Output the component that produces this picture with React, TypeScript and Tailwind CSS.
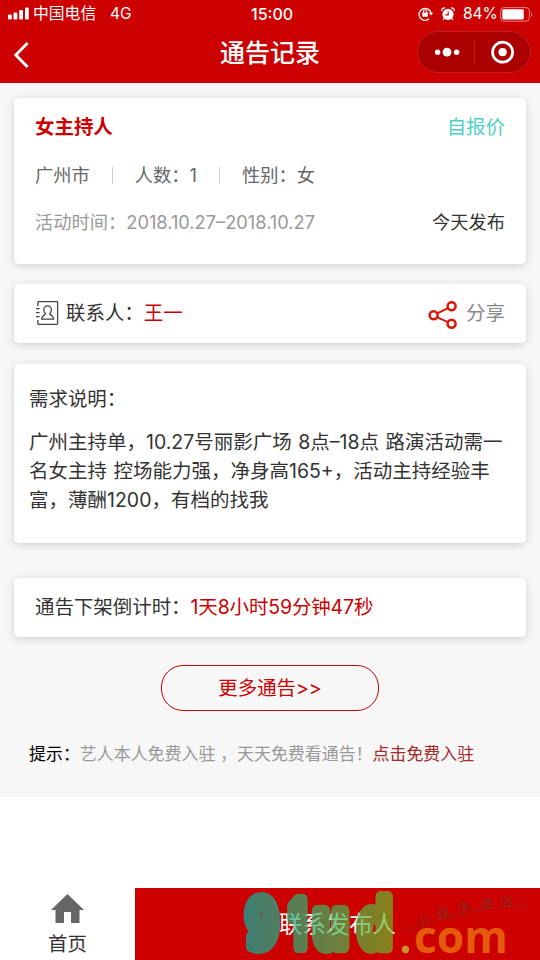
import type { ReactNode } from 'react';

const CARD = 'mx-[14px] rounded-[5px] bg-white shadow-[0_2px_8px_rgba(0,0,0,0.16)]';

function StatusBar() {
  return (
    <div className="flex h-7 items-center text-white">
      <svg className="ml-2 h-[14px] w-[22px] shrink-0" viewBox="0 0 22 14" fill="currentColor">
        <rect x="0" y="7.5" width="3.8" height="5" rx="1" />
        <rect x="5.5" y="5.5" width="3.8" height="7" rx="1" />
        <rect x="11.2" y="3" width="3.8" height="9.5" rx="1" />
        <rect x="17" y="0.5" width="3.8" height="12" rx="1" />
      </svg>
      <span className="ml-[3px] w-[77px] text-[15.8px]">中国电信</span>
      <span className="w-[141px] text-[15.5px]">4G</span>
      <span className="w-[167px] text-[16px] font-medium">15:00</span>
      <svg className="h-4 w-4 shrink-0" viewBox="0 0 16 16" fill="none" stroke="currentColor" strokeWidth="1.3">
        <path d="M11.2 12.8A6 6 0 1 1 13 7.2" />
        <path d="M10.8 6.8h4.4L13 9.6z" fill="currentColor" stroke="none" />
        <rect x="4.3" y="6.6" width="5.6" height="4.2" rx="0.6" fill="currentColor" stroke="none" />
        <path d="M5.5 7V5.4a1.6 1.6 0 0 1 3.2 0V7" strokeWidth="1.1" />
      </svg>
      <svg className="ml-[7px] h-[14px] w-[14px] shrink-0" viewBox="0 0 14 14" fill="currentColor">
        <circle cx="7" cy="7.4" r="5.6" />
        <path d="M3.2 11.4 2.2 13M10.8 11.4l1 1.6" stroke="currentColor" strokeWidth="1.3" />
        <path d="M1 4a2.2 2.2 0 0 1 3-2.8M13 4a2.2 2.2 0 0 0-3-2.8" stroke="currentColor" strokeWidth="1.3" fill="none" />
        <path d="M7.2 4.4v3.5H4.3" stroke="#cc0000" strokeWidth="1.1" fill="none" />
      </svg>
      <span className="ml-2 w-[37px] text-[15.5px]">84%</span>
      <svg className="h-[15px] w-[34px] shrink-0" viewBox="0 0 34 15">
        <rect x="0.6" y="0.6" width="28.8" height="13.6" rx="3.4" fill="none" stroke="#fff" strokeOpacity="0.5" />
        <rect x="2.3" y="2.3" width="21.5" height="10.2" rx="1.4" fill="#fff" />
        <path d="M31 5c1.6.6 1.6 4.2 0 4.8z" fill="#fff" fillOpacity="0.5" />
      </svg>
    </div>
  );
}

function NavBar() {
  return (
    <div className="flex h-[55px] items-center text-white">
      <svg className="ml-[13px] h-7 w-5" viewBox="0 0 20 28" fill="none" stroke="currentColor" strokeWidth="2.9">
        <path d="M14.6 1 2.8 13l11.8 12" />
      </svg>
      <h1 className="ml-[187px] flex-1 pb-[4px] text-[25px] font-medium whitespace-nowrap">通告记录</h1>
      <div className="mr-[9px] mb-[7px] flex h-[42px] w-[114px] items-center rounded-full border border-[#bf2222] bg-[#ab0000]">
        <svg className="h-full w-full" viewBox="0 0 112 40">
          <circle cx="19.6" cy="20.2" r="2.7" fill="#fff" />
          <circle cx="29" cy="20.2" r="4.4" fill="#fff" />
          <circle cx="38.6" cy="20.2" r="2.7" fill="#fff" />
          <path d="M56.2 8v24" stroke="#bf2222" />
          <circle cx="84.6" cy="20.2" r="10" fill="none" stroke="#fff" strokeWidth="2.8" />
          <circle cx="84.6" cy="20.2" r="4.1" fill="#fff" />
        </svg>
      </div>
    </div>
  );
}

function Divider() {
  return <i className="h-[17px] w-px bg-[#ccc]" />;
}

function Row({ children }: { children: ReactNode }) {
  return <div className="flex items-center justify-between">{children}</div>;
}

function ContactIcon() {
  return (
    <svg className="mb-[2px] h-6 w-[23px]" viewBox="0 0 23 24" fill="none" stroke="#444" strokeWidth="1.3">
      <path d="M1.9 5V1.2q0-.5.5-.5h18.4q.8 0 .8.8v21q0 .8-.8.8H2.4q-.5 0-.5-.5V19" />
      <path d="M0 7.7h3.6M0 11.7h3.6M0 15.7h3.6" />
      <path d="M9.6 12.7C8.4 11.6 7.8 10 7.8 8.7a3.8 3.8 0 0 1 7.6 0c0 1.3-.6 2.9-1.8 4 .2 1.3 4.1 1.5 4.1 5.4H5.5c0-3.9 3.9-4.1 4.1-5.4z" />
    </svg>
  );
}

function ShareIcon() {
  return (
    <svg className="mt-[3px] h-7 w-[29px]" viewBox="0 0 29 28" fill="none" stroke="#d81605" strokeWidth="2.5">
      <circle cx="5.6" cy="14.3" r="4" />
      <circle cx="23.6" cy="5.2" r="4" />
      <circle cx="23.6" cy="22.8" r="4" />
      <path d="m9.2 12.400 10.900-5.300M9.200 16.300l10.900 4.900" strokeWidth="2" />
    </svg>
  );
}

// Store watermark laid over the contact button
function Watermark() {
  return (
    <svg className="absolute inset-0 h-full w-full overflow-visible" viewBox="135 888 405 72">
      <defs>
        <linearGradient id="mark" gradientUnits="userSpaceOnUse" x1="243" y1="0" x2="393" y2="0">
          <stop offset="0" stopColor="#03b1a6" />
          <stop offset="1" stopColor="#6eb727" />
        </linearGradient>
      </defs>
      <g opacity="0.7" fontFamily="DejaVu Sans, sans-serif" fontWeight="700">
        <g fill="url(#mark)" stroke="url(#mark)" strokeWidth="12" strokeLinejoin="round" fontSize="65">
          <text x="245.5" y="946.5" textLength="33.5" lengthAdjust="spacingAndGlyphs">9</text>
          <text x="289" y="946.5" fontFamily="Inter, sans-serif" fontWeight="900" textLength="17" lengthAdjust="spacingAndGlyphs">1</text>
          <text x="312.5" y="946.5" textLength="36.5" lengthAdjust="spacingAndGlyphs">u</text>
          <text x="358" y="946.5" textLength="34.5" lengthAdjust="spacingAndGlyphs">d</text>
        </g>
        <circle cx="405.5" cy="949.5" r="3.7" fill="#d0cd44" />
        <text x="414" y="952.5" fill="#f18010" fontFamily="Open Sans, sans-serif" fontSize="45" textLength="94" lengthAdjust="spacingAndGlyphs">com</text>
      </g>
      <g opacity="0.8" fill="#60483c" fontSize="12.5" fontWeight="300" textAnchor="middle">
        <path d="M406 931q58-24 121-26" fill="none" stroke="#60483c" strokeWidth="0.6" />
        <text transform="translate(424 924) rotate(-14)">小</text>
        <text transform="translate(444 918) rotate(-12)">程</text>
        <text transform="translate(465 912) rotate(-10)">序</text>
        <text transform="translate(487 908) rotate(-8)">商</text>
        <text transform="translate(507 905) rotate(-6)">店</text>
      </g>
    </svg>
  );
}

export default function App() {
  return (
    <div className="flex h-[960px] w-[540px] flex-col overflow-hidden bg-white font-[Inter,'Noto_Sans_CJK_SC',sans-serif] text-[19.44px] text-[#333]">
      <header className="h-[83px] shrink-0 bg-[#cc0000]">
        <StatusBar />
        <NavBar />
      </header>

      <main className="h-[714px] shrink-0 bg-[#f7f7f7] pt-[15px]">
        <section className={`${CARD} h-[166px] px-[21px] pt-[15px] leading-[29px]`}>
          <Row>
            <h2 className="font-bold text-[#cc0000]">女主持人</h2>
            <span className="text-[#50d0c4]">自报价</span>
          </Row>
          <div className="mt-[19px] flex items-center gap-[22px] text-[18.25px] text-[#666]">
            <span>广州市</span>
            <Divider />
            <span>人数：1</span>
            <Divider />
            <span>性别：女</span>
          </div>
          <div className="mt-[18px] text-[18.25px]">
            <Row>
              <span className="text-[#999]">活动时间：2018.10.27–2018.10.27</span>
              <span>今天发布</span>
            </Row>
          </div>
        </section>

        <section className={`${CARD} mt-5 flex h-[59px] items-center pr-[21px] pl-[22px]`}>
          <ContactIcon />
          <span className="ml-[7px]">联系人：</span>
          <span className="text-[#cc0000]">王一</span>
          <div className="ml-auto flex items-center gap-[9px] text-[#888]">
            <ShareIcon />
            <span>分享</span>
          </div>
        </section>

        <section className={`${CARD} mt-[21px] h-[179px] px-[15px] pt-[21px] leading-[29px]`}>
          <h3>需求说明：</h3>
          <p className="mt-[14px] text-[19.5px] whitespace-nowrap [word-spacing:1px]">
            广州主持单，10.27号丽影广场 8点–18点 路演活动需一
            <br />
            名女主持 控场能力强，净身高165+，活动主持经验丰
            <br />
            富，薄酬1200，有档的找我
          </p>
        </section>

        <section className={`${CARD} mt-[35px] flex h-[59px] items-center px-[21px]`}>
          <span>通告下架倒计时：</span>
          <span className="tracking-[-0.1px] text-[#cc0000]">1天8小时59分钟47秒</span>
        </section>

        <button className="mx-auto mt-7 flex h-[46px] w-[218px] items-center justify-center rounded-[22px] border-[1.44px] border-[#cc0000] pt-px text-[#cc0000]">
          更多通告&gt;&gt;
        </button>

        <p className="mt-[30px] flex px-[29px] text-[16.95px] leading-[26px] whitespace-pre">
          <span className="text-black">提示：</span>
          <span className="text-[#999]">艺人本人免费入驻 ，天天免费看通告！</span>
          <a className="text-[#a52a2a]">点击免费入驻</a>
        </p>
      </main>

      <footer className="mt-auto flex h-[72px] shrink-0">
        <div className="flex w-[135px] flex-col items-center pt-[6px]">
          <svg className="h-[29px] w-[33px]" viewBox="0 0 33 29" fill="#666">
            <path d="M16.5 0 33 16h-4.500v13H20V18h-7v11H4.500V16H0z" />
          </svg>
          <span className="mt-[7px] leading-[29px]">首页</span>
        </div>
        <div className="relative flex flex-1 items-center justify-center bg-[#cc0000] pt-[2px] text-[23.4px] text-white">
          <span>联系发布人</span>
          <Watermark />
        </div>
      </footer>
    </div>
  );
}
